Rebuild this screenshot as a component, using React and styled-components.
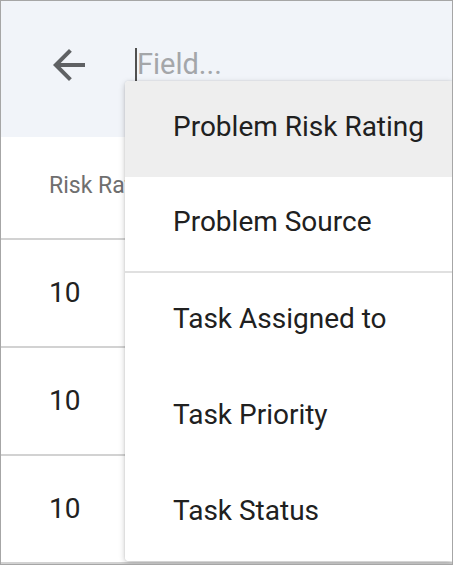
import React from "react";
import styled, { createGlobalStyle } from "styled-components";

const GlobalStyle = createGlobalStyle`
  html, body {
    margin: 0;
    padding: 0;
    background: #ffffff;
    font-family: Roboto, "Liberation Sans", sans-serif;
  }
`;

export const Frame = styled.div`
  position: relative;
  box-sizing: border-box;
  width: 453px;
  height: 565px;
  border: 1px solid #a6a6a6;
  overflow: hidden;
  background: #ffffff;
`;

export const Header = styled.div`
  display: flex;
  align-items: center;
  gap: 42px;
  height: 136px;
  box-sizing: border-box;
  padding: 40px 0 48px 44px;
  background: #f1f4f9;
`;

export const BackButton = styled.div`
  width: 48px;
  height: 48px;
  display: flex;
  align-items: center;
  justify-content: center;
  color: #5f6164;
`;

export const SearchField = styled.div`
  display: flex;
  align-items: center;
  height: 48px;
`;

export const Caret = styled.span`
  width: 2px;
  height: 34px;
  background: #505050;
`;

export const Placeholder = styled.span`
  font-size: 29px;
  color: #a4a6a9;
  padding-bottom: 2px;
`;

export const Table = styled.div`
  display: flex;
  flex-direction: column;
`;

export const HeadRow = styled.div`
  display: flex;
  align-items: center;
  height: 103px;
  box-sizing: border-box;
  padding: 0 0 4px 48px;
  border-bottom: 2px solid #d2d2d2;
  font-size: 23px;
  color: #6f6f6f;
  white-space: nowrap;
`;

export const Row = styled.div`
  display: flex;
  align-items: center;
  height: 108px;
  box-sizing: border-box;
  padding: 0 0 2px 48px;
  border-bottom: 2px solid #d2d2d2;
  font-size: 28px;
  color: #212121;
`;

export const Menu = styled.div`
  position: absolute;
  top: 80px;
  left: 124px;
  right: 0;
  background: #ffffff;
  border-radius: 4px 0 0 4px;
  box-shadow: 0 2px 6px rgba(0, 0, 0, 0.22), 0 0 2px rgba(0, 0, 0, 0.12);
  overflow: hidden;
`;

export const MenuItem = styled.div`
  display: flex;
  align-items: center;
  box-sizing: border-box;
  height: 96px;
  padding: 0 0 6px 48px;
  font-size: 28px;
  color: #202020;
  background: ${p => (p.active ? "#eeeeee" : "#ffffff")};
  border-bottom: ${p => (p.divided ? "2px solid #e0e0e0" : "none")};
  white-space: nowrap;
`;

const fields = [
  { label: "Problem Risk Rating", active: true },
  { label: "Problem Source", divided: true },
  { label: "Task Assigned to" },
  { label: "Task Priority" },
  { label: "Task Status" },
];

function ArrowBack() {
  return (
    <svg width="48" height="48" viewBox="0 0 24 24" fill="currentColor">
      <path d="M20 11H7.83l5.59-5.59L12 4l-8 8 8 8 1.41-1.41L7.83 13H20v-2z" />
    </svg>
  );
}

export default function App() {
  return (
    <>
      <GlobalStyle />
      <Frame>
        <Header>
          <BackButton>
            <ArrowBack />
          </BackButton>
          <SearchField>
            <Caret />
            <Placeholder>Field...</Placeholder>
          </SearchField>
        </Header>
        <Table>
          <HeadRow>Risk Rating</HeadRow>
          <Row>10</Row>
          <Row>10</Row>
          <Row>10</Row>
        </Table>
        <Menu>
          {fields.map(f => (
            <MenuItem key={f.label} active={f.active} divided={f.divided}>
              {f.label}
            </MenuItem>
          ))}
        </Menu>
      </Frame>
    </>
  );
}
